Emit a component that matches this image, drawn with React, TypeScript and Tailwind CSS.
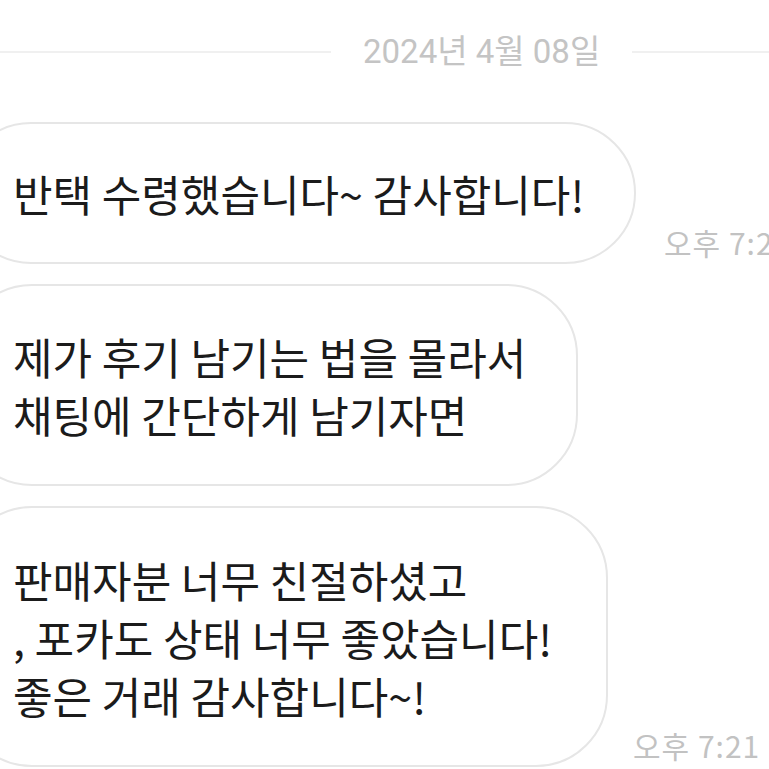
const Bubble = ({ lines, width, height }: { lines: string[]; width: string; height: string }) => (
  <div
    className={`-ml-[40px] flex shrink-0 flex-col justify-center rounded-[72px] border-2 border-[#e6e6e6] bg-white pl-[51px] ${width} ${height}`}
  >
    {lines.map((l) => (
      <p key={l} className="whitespace-nowrap text-[43px] leading-[58px] text-[#1b1b1b]">
        {l}
      </p>
    ))}
  </div>
);

const Time = ({ ml }: { ml: string }) => (
  <span className={`mb-[4px] whitespace-nowrap text-[30px] leading-[36px] tracking-[1px] text-[#c2c2c2] ${ml}`}>오후 7:21</span>
);

export default function App() {
  return (
    <div
      className="h-[769px] w-[769px] overflow-hidden bg-white"
      style={{ fontFamily: '"Noto Sans CJK KR", "Noto Sans", sans-serif' }}
    >
      <div className="flex h-[106px] items-center pb-[2px]">
        <div className="h-[2px] w-[331px] shrink-0 bg-[#f0f0f0]" />
        <span
          className="mx-[32px] whitespace-nowrap text-[33px] text-[#c4c4c4]"
          style={{ fontFamily: 'Roboto, "Noto Sans CJK KR", sans-serif' }}
        >
          2024년 4월 08일
        </span>
        <div className="h-[2px] flex-1 bg-[#f0f0f0]" />
      </div>

      <div className="mt-[16px] flex flex-col gap-[20px]">
        <div className="flex items-end">
          <Bubble lines={["반택 수령했습니다~ 감사합니다!"]} width="w-[676px]" height="h-[142px]" />
          <Time ml="ml-[28px]" />
        </div>
        <div className="flex items-end">
          <Bubble
            lines={["제가 후기 남기는 법을 몰라서", "채팅에 간단하게 남기자면"]}
            width="w-[618px]"
            height="h-[202px]"
          />
        </div>
        <div className="flex items-end">
          <Bubble
            lines={["판매자분 너무 친절하셨고", ", 포카도 상태 너무 좋았습니다!", "좋은 거래 감사합니다~!"]}
            width="w-[648px]"
            height="h-[261px]"
          />
          <Time ml="ml-[25px]" />
        </div>
      </div>
    </div>
  );
}
